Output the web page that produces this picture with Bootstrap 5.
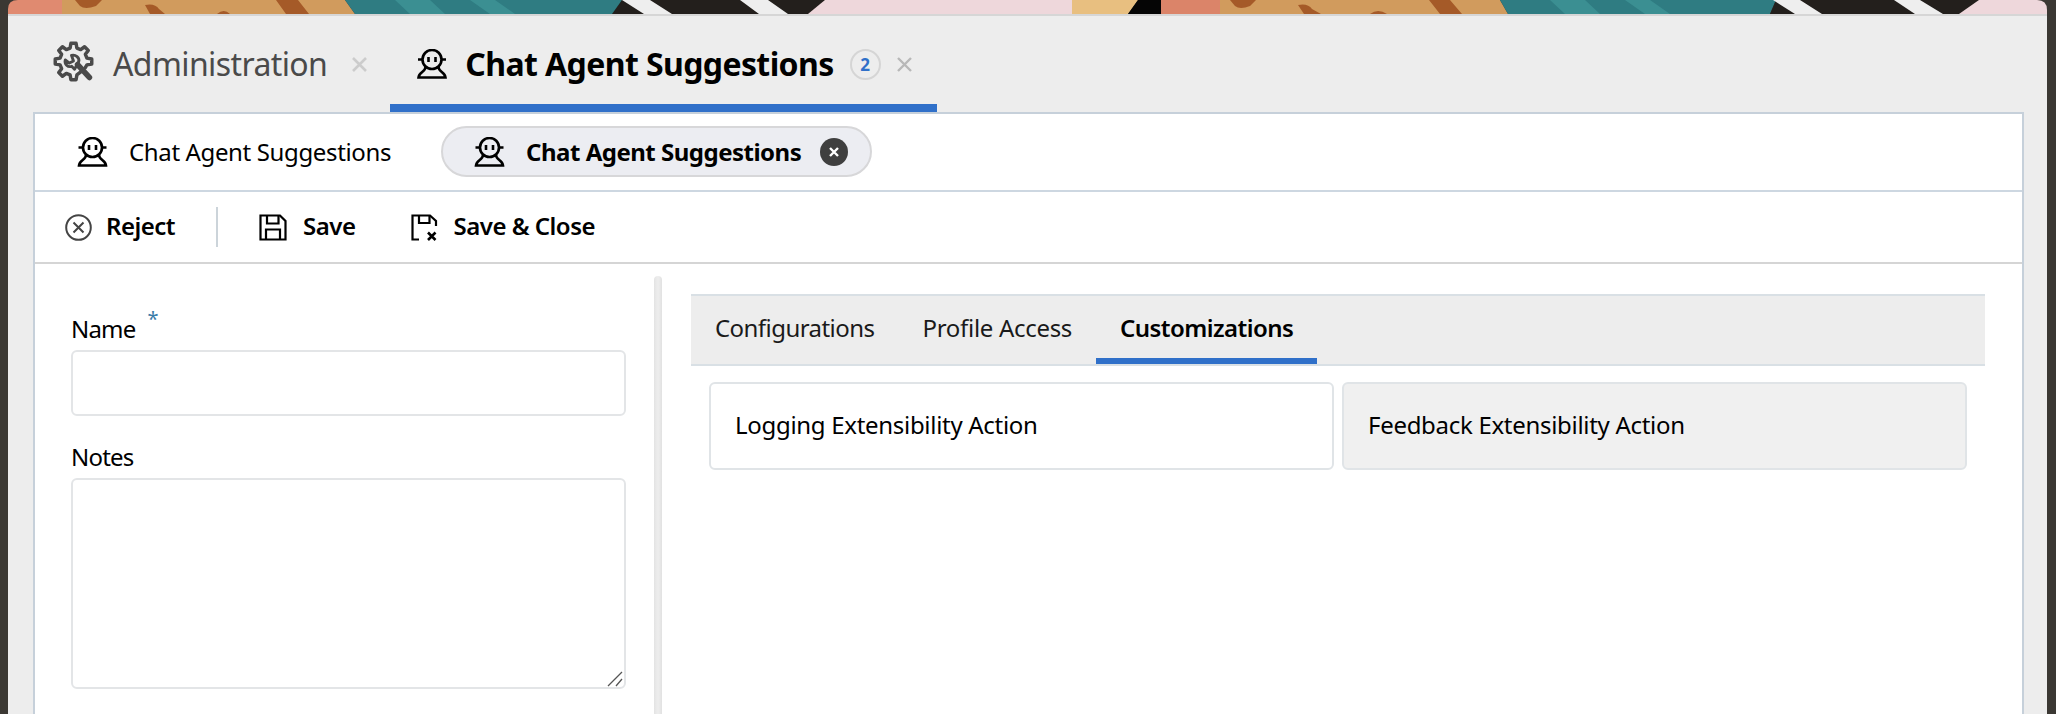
<!DOCTYPE html>
<html lang="en"><head><meta charset="utf-8"><title>Chat Agent Suggestions</title>
<link href="https://cdn.jsdelivr.net/npm/bootstrap@5.3.0/dist/css/bootstrap.min.css" rel="stylesheet">
<style>
html,body{height:714px;overflow:hidden}
body{background:#3b3833;font-family:"Noto Sans","Open Sans",sans-serif;color:#000}
.wall{display:block;width:2056px;height:14px}
.win{margin:0 9px 0 8px;height:700px;background:#ededed;border-top:2px solid #d6d6d6;display:flex;flex-direction:column;overflow:hidden}
.top-tabs{height:96px;flex:none;padding-left:45px}
.ttab{display:flex;align-items:center;height:96px;font-size:32px;line-height:1}
.ttab-a{color:#4a4a4a;padding-right:23px;gap:19px;letter-spacing:-.6px}
.ttab-a .gear{margin-top:-6px}
.ttab-b{font-weight:700;padding:8px 25px 0 27px;gap:18px;border-bottom:8px solid #3070c9;letter-spacing:-.6px}
.ttab-b .ic-x{margin-left:-2px}
.tt-a-x{margin-left:6px}
.cnt{width:31px;height:31px;border:2px solid #d5d5d5;border-radius:50%;color:#3070c9;font-size:17px;font-weight:700;margin-left:-2px;display:flex;align-items:center;justify-content:center;letter-spacing:0}
.panel{flex:1;margin:0 23px 0 25px;background:#fff;border:2px solid #c6d0da;border-bottom:0;display:flex;flex-direction:column;min-height:0}
.subbar{height:76px;flex:none;border-bottom:2px solid #cdd7e1;padding-left:42px;box-sizing:content-box;gap:50px;align-items:center;font-size:24px;line-height:1;letter-spacing:-.36px}
.stab{display:flex;align-items:center;gap:21px}
.spill{height:51px;padding:0 22px 0 31px;margin-bottom:1px;background:#ecedf2;border:2px solid #d7d7d9;border-radius:26px;font-weight:700;gap:21px;letter-spacing:-.5px}
.spill .xdot{margin-left:-2px}
.xdot{width:28px;height:28px;border-radius:50%;background:#3f3f3f;display:flex;align-items:center;justify-content:center}
.tbar{height:70px;flex:none;border-bottom:2px solid #d5d5d5;box-sizing:content-box;padding-left:30px;align-items:center;font-size:24px;font-weight:600;line-height:1;letter-spacing:-.5px}
.tbtn{display:flex;align-items:center;gap:14px}
.tbtn span{margin-top:-3px}
.tbtn-s{gap:16px}
.tbtn-c{gap:16px;margin-left:55px}
.tsep{width:2px;height:40px;background:#ccd4da;margin:0 41px}
.work{flex:1;display:flex;min-height:0}
.lpane{width:619px;flex:none;padding:50px 28px 0 36px}
.fld-label{font-size:24px;line-height:30px;height:30px;margin:0 0 6px;display:block;letter-spacing:-.8px}
.req{color:#3a7ca8;font-size:20px;line-height:0;vertical-align:12px;margin-left:12px}
.txt{border:2px solid #e3e5e7;border-radius:6px;background:#fff;box-shadow:none}
.txt-in{height:66px;margin-bottom:26px}
.txt-ar{height:211px;resize:none}
.grip{position:absolute;right:3px;bottom:2px;pointer-events:none}
.split{width:8px;flex:none;margin-top:12px;background:linear-gradient(90deg,#e3e3e3,#ececec 40%,#ececec 60%,#e1e1e1);border-radius:4px 4px 0 0}
.rpane{flex:1;padding:30px 37px 0 29px;min-width:0}
.inner-tabs{height:72px;background:#ededed;border-top:2px solid #d9e0e5;border-bottom:2px solid #d9e0e5;font-size:24px;line-height:1;letter-spacing:-.55px}
.itab{display:flex;align-items:center;padding:0 24px 4px;height:68px;color:#1a1a1a}
.itab+.itab{letter-spacing:-.3px}
.inner-tabs .itab-on{font-weight:600;color:#000;border-bottom:6px solid #3070c9;padding:2px 24px 0;letter-spacing:-.55px}
.cards{padding:16px 18px 0 18px;gap:8px}
.acard{flex:1 1 0;height:88px;border:2px solid #e0e4e7;border-radius:6px;font-size:24px;line-height:1;letter-spacing:-.3px;padding:0 24px 3px;display:flex;flex-direction:column;justify-content:center;background:#fff}
.acard-off{background:#f0f0f0}
</style></head>
<body>
<svg class="wall" viewBox="0 0 2056 14" preserveAspectRatio="none" aria-hidden="true">
<path d="M8 14V9Q8 0 18 0H62V14Z" fill="#e08a70"/>
<path d="M62 0H345L355 14H62Z" fill="#d19b5d"/>
<path d="M345 0H622L615 14H355Z" fill="#2f7c82"/>
<path d="M395 0H430L445 14H410ZM470 0H495L515 14H490Z" fill="#3b8f92"/>
<path d="M622 0H825L808 14H612Z" fill="#231f1c"/>
<path d="M622 0H650L672 14H644ZM740 0H768L788 14H759Z" fill="#eeeeee"/>
<path d="M825 0H1072V14H808Z" fill="#eed7db"/>
<path d="M1072 0H1138L1128 14H1072Z" fill="#e8bf80"/>
<path d="M1138 0H1161V14H1128Z" fill="#050505"/>
<path d="M1161 0H1220V14H1161Z" fill="#db8469"/>
<path d="M1220 0H1500L1508 14H1220Z" fill="#d19b5d"/>
<path d="M1500 0H1776L1770 14H1508Z" fill="#2f7c82"/>
<path d="M1550 0H1585L1600 14H1565ZM1625 0H1650L1670 14H1645Z" fill="#3b8f92"/>
<path d="M1776 0H1979L1959 14H1770Z" fill="#231f1c"/>
<path d="M1773 0H1800L1822 14H1795ZM1894 0H1920L1943 14H1915Z" fill="#eeeeee"/>
<path d="M1979 0H2037Q2047 0 2047 10V14H1959Z" fill="#eed7db"/>
<path d="M75 0H102L96 6Q85 10 80 6ZM145 5Q155 3 159 9L165 14H150ZM217 14Q224 8 230 14ZM276 0H298L309 14H286ZM1230 0H1256L1250 6Q1240 10 1235 6ZM1298 5Q1308 3 1312 9L1321 14H1304ZM1370 14Q1378 8 1387 14ZM1429 0H1450L1462 14H1440Z" fill="#a55a28"/>
</svg>
<div class="win">
<nav class="top-tabs nav flex-nowrap">
<div class="ttab ttab-a">
<svg class="gear" width="41" height="41" viewBox="0 0 40 40" fill="none" stroke="#4a4a4a" stroke-width="3.4" stroke-linejoin="round" stroke-linecap="round" aria-hidden="true"><path d="M28 29.5L23.3 33.1 22.5 37.8H17.5L16.7 33.1 13 31.6 9.2 34.4 5.6 30.8 8.4 27 6.9 23.3 2.2 22.5V17.5L6.9 16.7 8.4 13 5.6 9.2 9.2 5.6 13 8.4 16.7 6.9 17.5 2.2H22.5L23.3 6.9 27 8.4 30.8 5.6 34.4 9.2 31.6 13 33.1 16.7 37.8 17.5V22.5L33.1 23.3 31.5 26"/><path d="M21 27.5L18.2 24.7C14.5 26 10.8 22.5 12 18.5L16 21.5 20 19.5 18 14C21.8 12.800 26.5 16.5 25 20.5Z" stroke-width="2.8"/><path d="M24 23L35.5 35.5" stroke-width="5.5"/></svg>
<span>Administration</span>
<svg class="tt-a-x" width="15" height="15" viewBox="0 0 15 15" stroke="#cccccc" stroke-width="2.6" aria-hidden="true"><path d="M1 1L14 14M14 1L1 14"/></svg>
</div>
<div class="ttab ttab-b">
<svg width="30" height="30" viewBox="0 0 30 30" fill="none" stroke="#000" stroke-width="2.6" aria-hidden="true"><circle cx="15" cy="10.500" r="9.500"/><path d="M5 10.500H1M25 10.500H29M11.500 8v5M18.500 8v5"/><path d="M8.500 18C8.500 23 2 23 1.500 28.500H28.500C28 23 21.500 23 21.500 18"/></svg>
<span>Chat Agent Suggestions</span>
<span class="cnt">2</span>
<svg class="ic-x" width="15" height="15" viewBox="0 0 15 15" stroke="#b8b8b8" stroke-width="2.400" aria-hidden="true"><path d="M1 1L14 14M14 1L1 14"/></svg>
</div>
</nav>
<div class="panel">
<div class="subbar d-flex">
<div class="stab">
<svg width="31" height="30" viewBox="0 0 30 30" fill="none" stroke="#000" stroke-width="2.600" aria-hidden="true"><circle cx="15" cy="10.500" r="9.500"/><path d="M5 10.500H1M25 10.500H29M11.500 8v5M18.500 8v5"/><path d="M8.500 18C8.500 23 2 23 1.500 28.500H28.500C28 23 21.500 23 21.500 18"/></svg>
<span>Chat Agent Suggestions</span>
</div>
<div class="stab spill">
<svg width="31" height="30" viewBox="0 0 30 30" fill="none" stroke="#000" stroke-width="2.600" aria-hidden="true"><circle cx="15" cy="10.500" r="9.500"/><path d="M5 10.500H1M25 10.500H29M11.500 8v5M18.500 8v5"/><path d="M8.500 18C8.500 23 2 23 1.500 28.500H28.500C28 23 21.500 23 21.500 18"/></svg>
<span>Chat Agent Suggestions</span>
<span class="xdot"><svg width="10" height="10" viewBox="0 0 10 10" stroke="#fff" stroke-width="2.400" aria-hidden="true"><path d="M1 1L9 9M9 1L1 9"/></svg></span>
</div>
</div>
<div class="tbar d-flex">
<div class="tbtn">
<svg width="27" height="27" viewBox="0 0 27 27" fill="none" stroke="#444" stroke-width="2" aria-hidden="true"><circle cx="13.500" cy="13.500" r="12.300"/><path d="M8.500 8.500L18.500 18.500M18.500 8.500L8.500 18.500"/></svg>
<span>Reject</span>
</div>
<div class="tsep"></div>
<div class="tbtn tbtn-s">
<svg width="28" height="27" viewBox="0 0 28 27" fill="none" stroke="#000" stroke-width="2.200" aria-hidden="true"><path d="M1.500 1.500H21L26.500 7V25.500H1.500Z"/><path d="M8 1.500V9.500H19.500V1.500M7 25.500V15.500H21V25.500"/></svg>
<span>Save</span>
</div>
<div class="tbtn tbtn-c">
<svg width="27" height="27" viewBox="0 0 27 27" fill="none" stroke="#000" stroke-width="2.200" aria-hidden="true"><path d="M8 25.500H1.500V1.500H19L25 7V12"/><path d="M8 1.500V9H18.500V1.500"/><path d="M17 18.500L24.500 26M24.500 18.500L17 26" stroke-width="2.600"/></svg>
<span>Save &amp; Close</span>
</div>
</div>
<div class="work">
<div class="lpane">
<label class="fld-label" for="nm">Name<span class="req">*</span></label>
<input id="nm" class="form-control txt txt-in" type="text">
<label class="fld-label" for="nt">Notes</label>
<div class="position-relative">
<textarea id="nt" class="form-control txt txt-ar"></textarea>
<svg class="grip" width="16" height="16" viewBox="0 0 16 16" stroke="#555" stroke-width="1.300" aria-hidden="true"><path d="M1 15L15 1M9 15L15 8"/></svg>
</div>
</div>
<div class="split"></div>
<div class="rpane">
<div class="inner-tabs d-flex">
<div class="itab">Configurations</div>
<div class="itab">Profile Access</div>
<div class="itab itab-on">Customizations</div>
</div>
<div class="cards d-flex">
<div class="acard">Logging Extensibility Action</div>
<div class="acard acard-off">Feedback Extensibility Action</div>
</div>
</div>
</div>
</div>
</div>
</body></html>
